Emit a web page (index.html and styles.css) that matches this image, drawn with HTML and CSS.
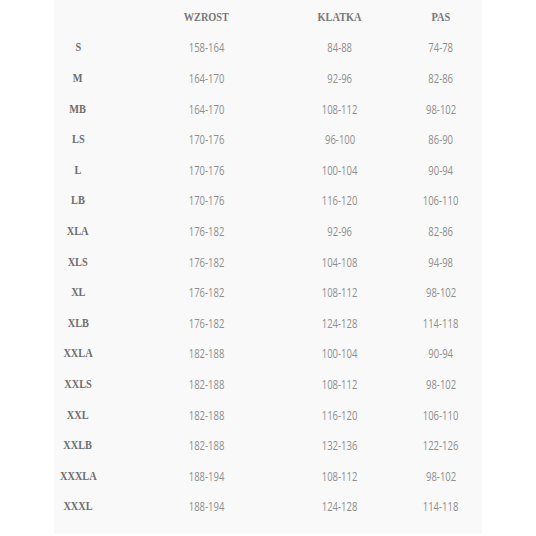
FILE: index.html
```html
<!DOCTYPE html>
<html>
<head>
<meta charset="utf-8">
<link rel="stylesheet" href="styles.css">
</head>
<body>
<div class="panel">
  <div class="table">
    <div class="row head"><span></span><span>WZROST</span><span>KLATKA</span><span>PAS</span></div>
    <div class="row"><span>S</span><span>158-164</span><span>84-88</span><span>74-78</span></div>
    <div class="row"><span>M</span><span>164-170</span><span>92-96</span><span>82-86</span></div>
    <div class="row"><span>MB</span><span>164-170</span><span>108-112</span><span>98-102</span></div>
    <div class="row"><span>LS</span><span>170-176</span><span>96-100</span><span>86-90</span></div>
    <div class="row"><span>L</span><span>170-176</span><span>100-104</span><span>90-94</span></div>
    <div class="row"><span>LB</span><span>170-176</span><span>116-120</span><span>106-110</span></div>
    <div class="row"><span>XLA</span><span>176-182</span><span>92-96</span><span>82-86</span></div>
    <div class="row"><span>XLS</span><span>176-182</span><span>104-108</span><span>94-98</span></div>
    <div class="row"><span>XL</span><span>176-182</span><span>108-112</span><span>98-102</span></div>
    <div class="row"><span>XLB</span><span>176-182</span><span>124-128</span><span>114-118</span></div>
    <div class="row"><span>XXLA</span><span>182-188</span><span>100-104</span><span>90-94</span></div>
    <div class="row"><span>XXLS</span><span>182-188</span><span>108-112</span><span>98-102</span></div>
    <div class="row"><span>XXL</span><span>182-188</span><span>116-120</span><span>106-110</span></div>
    <div class="row"><span>XXLB</span><span>182-188</span><span>132-136</span><span>122-126</span></div>
    <div class="row"><span>XXXLA</span><span>188-194</span><span>108-112</span><span>98-102</span></div>
    <div class="row"><span>XXXL</span><span>188-194</span><span>124-128</span><span>114-118</span></div>
  </div>
</div>
</body>
</html>
```
FILE: styles.css
```css
html, body {
  margin: 0;
  padding: 0;
  background: #ffffff;
}
.panel {
  margin-left: 54px;
  width: 428px;
  height: 534px;
  background: #f9f9f9;
  padding-top: 2px;
  box-sizing: border-box;
}
.table {
  display: flex;
  flex-direction: column;
}
.row {
  display: grid;
  grid-template-columns: 48px 209px 58px 144px;
  height: 30.6px;
  align-items: center;
  justify-items: center;
  font-family: "Open Sans", "Liberation Sans", sans-serif;
  font-size: 12px;
  color: #8e8e8e;
}
.row span {
  white-space: nowrap;
  transform: scaleX(0.79);
}
.row span:first-child,
.head span {
  font-family: "Liberation Serif", serif;
  font-weight: bold;
  font-size: 12px;
  transform: scaleX(0.86);
  color: #6e6e6e;
}
.head span {
  color: #787878;
}
```
